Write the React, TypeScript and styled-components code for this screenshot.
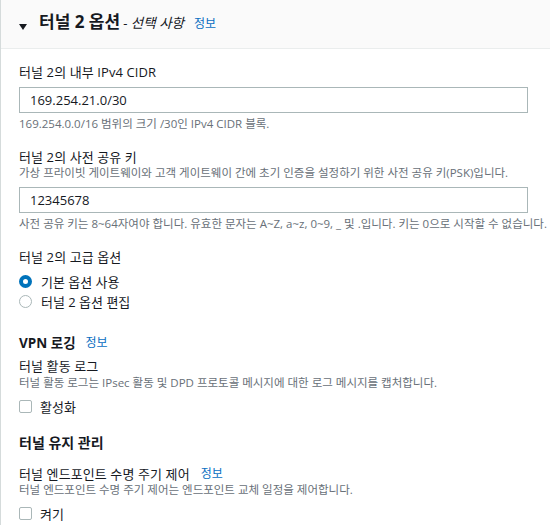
import styled, { createGlobalStyle } from "styled-components";

const GlobalStyle = createGlobalStyle`
  body {
    margin: 0;
    background: #ffffff;
    font-family: "Open Sans", "Noto Sans CJK KR", sans-serif;
    color: #16191f;
  }
`;

const Panel = styled.div`
  width: 550px;
  height: 525px;
  border-left: 1px solid #d5dbdb;
  box-sizing: border-box;
  overflow: hidden;
`;

const Header = styled.div`
  height: 49px;
  box-sizing: border-box;
  background: #fafafa;
  border-bottom: 1px solid #eaeded;
  padding: 10px 18px 0 18px;
  display: flex;
  align-items: flex-start;
`;

const Caret = styled.svg`
  width: 8px;
  height: 6px;
  margin: 14px 12px 0 0;
  flex-shrink: 0;
`;

const Title = styled.h2`
  margin: 0;
  font-size: 17px;
  line-height: 23px;
  font-weight: 700;
  white-space: nowrap;
`;

const Optional = styled.span`
  font-size: 13.5px;
  font-weight: 400;
  font-style: italic;
  margin-left: 3px;
`;

const InfoLink = styled.a`
  color: #0a6fc2;
  font-size: 12px;
  font-weight: 400;
  text-decoration: none;
  margin-left: ${(p: { $gap?: number }) => p.$gap ?? 8}px;
`;

const Body = styled.div`
  padding: 13px 22px 0 18px;
  display: flex;
  flex-direction: column;
`;

const Label = styled.div<{ $top?: number }>`
  font-size: 13px;
  line-height: 20px;
  letter-spacing: 0.1px;
  margin-top: ${(p) => p.$top ?? 0}px;
  white-space: nowrap;
`;

const Description = styled.div<{ $top?: number }>`
  font-size: 11.5px;
  line-height: 16px;
  color: #687078;
  margin-top: ${(p) => p.$top ?? 0}px;
  white-space: nowrap;
`;

const TextInput = styled.input`
  display: block;
  width: 100%;
  height: 26px;
  box-sizing: border-box;
  margin-top: ${(p: { $top?: number }) => p.$top ?? 0}px;
  border: 1px solid #aab7b8;
  border-radius: 0;
  padding: 0 10px;
  font-family: "Open Sans", "Noto Sans CJK KR", sans-serif;
  font-size: 13px;
  color: #16191f;
  outline: none;
`;

const SectionTitle = styled.h3<{ $top?: number; $size?: number }>`
  margin: ${(p) => p.$top ?? 0}px 0 0 0;
  font-size: ${(p) => p.$size ?? 14}px;
  line-height: 22px;
  font-weight: 700;
  display: flex;
  align-items: center;
`;

const OptionList = styled.div`
  display: flex;
  flex-direction: column;
  margin-top: 4px;
`;

const OptionRow = styled.label<{ $top?: number }>`
  display: flex;
  align-items: center;
  height: 20px;
  gap: 9px;
  font-size: 13px;
  margin-top: ${(p) => p.$top ?? 0}px;
`;

const RadioDot = styled.span<{ $checked?: boolean }>`
  width: 13px;
  height: 13px;
  box-sizing: border-box;
  border-radius: 50%;
  background: #ffffff;
  border: ${(p) => (p.$checked ? "4px solid #0073bb" : "1px solid #aab7b8")};
  flex-shrink: 0;
`;

const CheckBox = styled.span`
  width: 13px;
  height: 13px;
  box-sizing: border-box;
  border: 1px solid #aab7b8;
  border-radius: 2px;
  background: #ffffff;
  flex-shrink: 0;
  margin-right: -1px;
`;

const LabelRow = styled(Label)`
  display: flex;
  align-items: center;
`;

export default function App() {
  return (
    <>
      <GlobalStyle />
      <Panel>
        <Header>
          <Caret viewBox="0 0 8 6">
            <path d="M0 0 L8 0 L4 6 Z" fill="#16191f" />
          </Caret>
          <Title>
            터널 2 옵션
            <Optional>- 선택 사항</Optional>
            <InfoLink href="#" $gap={10}>정보</InfoLink>
          </Title>
        </Header>
        <Body>
          <Label>터널 2의 내부 IPv4 CIDR</Label>
          <TextInput $top={5} defaultValue="169.254.21.0/30" />
          <Description $top={3}>169.254.0.0/16 범위의 크기 /30인 IPv4 CIDR 블록.</Description>

          <Label $top={15}>터널 2의 사전 공유 키</Label>
          <Description $top={-2}>
            가상 프라이빗 게이트웨이와 고객 게이트웨이 간에 초기 인증을 설정하기 위한 사전 공유 키(PSK)입니다.
          </Description>
          <TextInput $top={6} defaultValue="12345678" />
          <Description $top={3}>
            사전 공유 키는 8~64자여야 합니다. 유효한 문자는 A~Z, a~z, 0~9, _ 및 .입니다. 키는 0으로 시작할 수 없습니다.
          </Description>

          <Label $top={15}>터널 2의 고급 옵션</Label>
          <OptionList>
            <OptionRow>
              <RadioDot $checked />
              기본 옵션 사용
            </OptionRow>
            <OptionRow>
              <RadioDot />
              터널 2 옵션 편집
            </OptionRow>
          </OptionList>

          <SectionTitle $top={21} $size={13.5}>
            VPN 로깅
            <InfoLink href="#" $gap={10}>정보</InfoLink>
          </SectionTitle>
          <Label $top={2}>터널 활동 로그</Label>
          <Description $top={-1}>
            터널 활동 로그는 IPsec 활동 및 DPD 프로토콜 메시지에 대한 로그 메시지를 캡처합니다.
          </Description>
          <OptionRow $top={5}>
            <CheckBox />
            활성화
          </OptionRow>

          <SectionTitle $top={16} $size={14}>
            터널 유지 관리
          </SectionTitle>
          <LabelRow $top={10}>
            터널 엔드포인트 수명 주기 제어
            <InfoLink href="#" $gap={11}>정보</InfoLink>
          </LabelRow>
          <Description $top={-2}>
            터널 엔드포인트 수명 주기 제어는 엔드포인트 교체 일정을 제어합니다.
          </Description>
          <OptionRow $top={5}>
            <CheckBox />
            켜기
          </OptionRow>
        </Body>
      </Panel>
    </>
  );
}
